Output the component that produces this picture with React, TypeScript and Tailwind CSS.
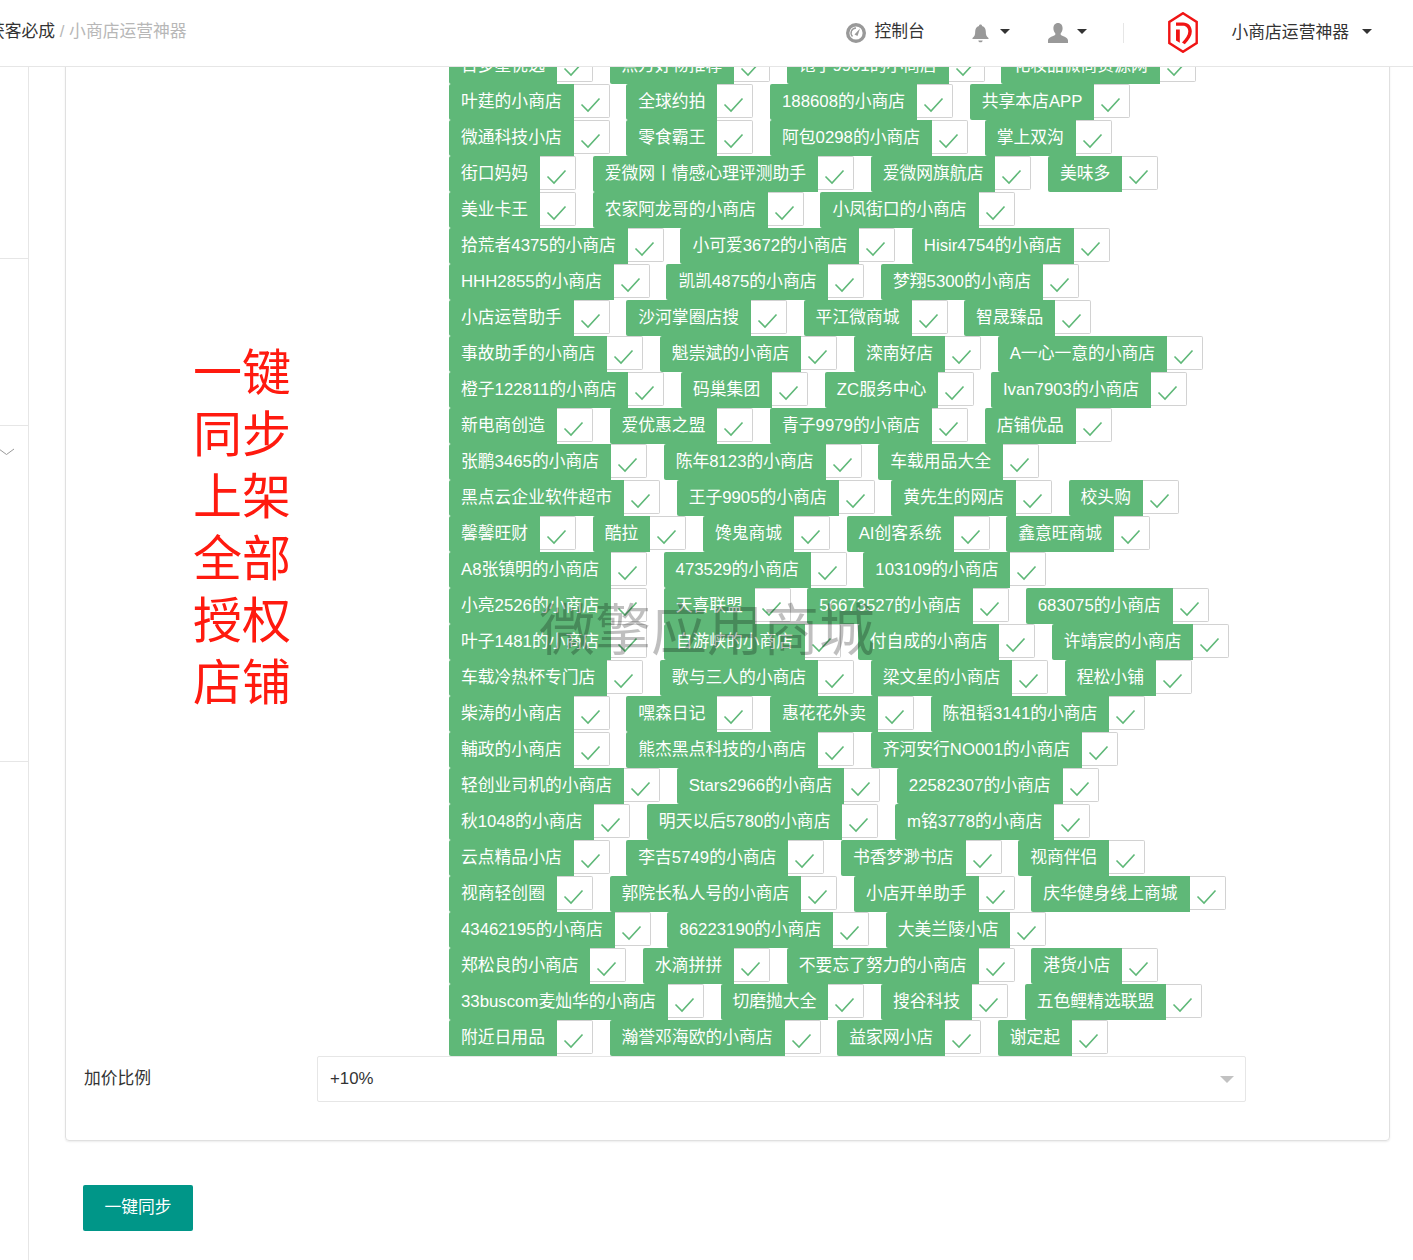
const rows: string[][] = [
  ["百多星优选", "点万好物推荐", "饱子9901的小商店", "化妆品微商货源网"],
  ["叶莛的小商店", "全球约拍", "188608的小商店", "共享本店APP"],
  ["微通科技小店", "零食霸王", "阿包0298的小商店", "掌上双沟"],
  ["街口妈妈", "爱微网丨情感心理评测助手", "爱微网旗航店", "美味多"],
  ["美业卡王", "农家阿龙哥的小商店", "小凤街口的小商店"],
  ["拾荒者4375的小商店", "小可爱3672的小商店", "Hisir4754的小商店"],
  ["HHH2855的小商店", "凯凯4875的小商店", "梦翔5300的小商店"],
  ["小店运营助手", "沙河掌圈店搜", "平江微商城", "智晟臻品"],
  ["事故助手的小商店", "魁崇斌的小商店", "滦南好店", "A一心一意的小商店"],
  ["橙子122811的小商店", "码巢集团", "ZC服务中心", "Ivan7903的小商店"],
  ["新电商创造", "爱优惠之盟", "青子9979的小商店", "店铺优品"],
  ["张鹏3465的小商店", "陈年8123的小商店", "车载用品大全"],
  ["黑点云企业软件超市", "王子9905的小商店", "黄先生的网店", "校头购"],
  ["馨馨旺财", "酷拉", "馋鬼商城", "AI创客系统", "鑫意旺商城"],
  ["A8张镇明的小商店", "473529的小商店", "103109的小商店"],
  ["小亮2526的小商店", "天喜联盟", "56673527的小商店", "683075的小商店"],
  ["叶子1481的小商店", "自游峡的小商店", "付自成的小商店", "许靖宸的小商店"],
  ["车载冷热杯专门店", "歌与三人的小商店", "梁文星的小商店", "程松小铺"],
  ["柴涛的小商店", "嘿森日记", "惠花花外卖", "陈祖韬3141的小商店"],
  ["輔政的小商店", "熊杰黑点科技的小商店", "齐河安行NO001的小商店"],
  ["轻创业司机的小商店", "Stars2966的小商店", "22582307的小商店"],
  ["秋1048的小商店", "明天以后5780的小商店", "m铭3778的小商店"],
  ["云点精品小店", "李吉5749的小商店", "书香梦渺书店", "视商伴侣"],
  ["视商轻创圈", "郭院长私人号的小商店", "小店开单助手", "庆华健身线上商城"],
  ["43462195的小商店", "86223190的小商店", "大美兰陵小店"],
  ["郑松良的小商店", "水滴拼拼", "不要忘了努力的小商店", "港货小店"],
  ["33buscom麦灿华的小商店", "切磨抛大全", "搜谷科技", "五色鲤精选联盟"],
  ["附近日用品", "瀚誉邓海欧的小商店", "益家网小店", "谢定起"],
];

function Caret({ color = "#333333", w = 10, h = 5 }: { color?: string; w?: number; h?: number }) {
  return (
    <svg width={w} height={h} viewBox="0 0 10 5" className="block shrink-0">
      <path d="M0 0h10L5 5z" fill={color} />
    </svg>
  );
}

function Item({ name }: { name: string }) {
  return (
    <div className="flex h-[36px] shrink-0">
      <div className="flex h-[36px] items-center whitespace-nowrap rounded-l-[2px] bg-[#5FB878] px-3 text-white">
        {name}
      </div>
      <div className="h-[34px] w-[36px] rounded-r-[2px] border border-l-0 border-[#d2d2d2] bg-white">
        <svg width="36" height="34" viewBox="0 0 36 34" fill="none">
          <path d="M7.500 19.500L14 26L25.500 13.500" stroke="#5FB878" strokeWidth="1.600" />
        </svg>
      </div>
    </div>
  );
}

export default function App() {
  return (
    <div className="relative flex h-[1260px] flex-col overflow-hidden bg-white font-['Liberation_Sans','Noto_Sans_CJK_SC',sans-serif] text-[16.8px] text-[#333333]">
      <header className="relative z-10 flex h-[67px] shrink-0 items-center border-b border-[#e6e6e6] bg-white">
        <div className="-ml-[12px] -mt-[3px] whitespace-nowrap">
          获客必成 <span className="text-[#b7b7b7]">/ 小商店运营神器</span>
        </div>
        <div className="ml-auto flex items-center">
          <svg width="20" height="20" viewBox="0 0 20 20" fill="none">
            <circle cx="10" cy="10" r="8.300" stroke="#999999" strokeWidth="3.400" />
            <path d="M10 5a5 5 0 0 0-3.500 8.500" stroke="#999999" strokeWidth="1.400" />
            <path d="M8.500 11.500L14 5.500L11.500 13z" fill="#999999" />
          </svg>
          <span className="-mt-[3px] ml-[9px] w-[97px]">控制台</span>
          <svg width="17" height="19" viewBox="0 0 17 19">
            <path
              d="M8.500 0.500c1 0 1.500.6 1.500 1.400 2.600.7 3.800 2.800 3.800 5.600 0 3.200.6 5 2.700 6.600v1H.5v-1c2.100-1.600 2.700-3.400 2.700-6.600 0-2.800 1.200-4.900 3.800-5.600 0-.8.5-1.400 1.500-1.400zM6.300 16.400h4.400c-.2 1.200-1 1.900-2.200 1.900s-2-.7-2.200-1.900z"
              fill="#999999"
            />
          </svg>
          <span className="-mt-[3px] ml-[11px] mr-[38px]">
            <Caret />
          </span>
          <svg width="20" height="20" viewBox="0 0 20 20">
            <path
              d="M10 0c3 0 4.600 2.300 4.600 5.200 0 2-.7 3.800-1.900 5v1.600c1 1.300 7.300 2.100 7.300 5.600V20H0v-2.600c0-3.500 6.300-4.300 7.300-5.600v-1.600C6.100 9 5.400 7.200 5.400 5.200 5.400 2.300 7 0 10 0z"
              fill="#999999"
            />
          </svg>
          <span className="-mt-[3px] ml-[9px] mr-[36px]">
            <Caret />
          </span>
          <div className="h-[20px] w-px bg-[#e6e6e6]" />
          <svg width="30" height="41" viewBox="0 0 30 41" fill="none" className="-mt-[2px] ml-[44px]">
            <path d="M15 1.200L28.700 10V31L15 39.800L1.300 31V10z" stroke="#f01414" strokeWidth="2.400" />
            <path
              d="M8 10.500h7c5.600 0 8.800 3.900 8.800 9 0 3.900-2.300 8-7 12.800l-2.800-1.800c3.500-3.400 6.300-7.300 6.300-11 0-3.300-2-5.800-5.300-5.800H8z"
              fill="#f01414"
            />
            <path d="M8 17.500h3.800v13.300L8 28.400z" fill="#f01414" />
          </svg>
          <span className="-mt-[1px] ml-[34px] whitespace-nowrap">小商店运营神器</span>
          <span className="-mt-[3px] ml-[13px] mr-[41px]">
            <Caret />
          </span>
        </div>
      </header>

      <div className="flex min-h-0 flex-1">
        <aside className="flex w-[29px] shrink-0 flex-col border-r border-[#e6e6e6]">
          <div className="h-[192px] border-b border-[#e6e6e6]" />
          <div className="h-[167px] border-b border-[#e6e6e6]" />
          <div className="h-[336px] border-b border-[#e6e6e6] pt-[22px]">
            <svg width="16" height="8" viewBox="0 0 16 8" fill="none" className="-ml-px">
              <path d="M0 1l7.500 5.500L15 1" stroke="#999999" />
            </svg>
          </div>
        </aside>

        <main className="ml-[36px] w-[1325px] shrink-0">
          <div className="-mt-[20px] rounded-b-[4px] border border-[#e0e0e0] pb-[38px] shadow-[0_1px_2px_rgba(0,0,0,0.08)]">
            <div className="flex">
              <div className="w-[383px] shrink-0 pl-[127px] pt-[294px] text-[49px] leading-[62px] text-[#ff1a0f]">
                <div>一键</div>
                <div>同步</div>
                <div>上架</div>
                <div>全部</div>
                <div>授权</div>
                <div>店铺</div>
              </div>
              <div className="flex flex-col">
                {rows.map((row, i) => (
                  <div key={i} className="flex h-[36px] gap-[16.6px]">
                    {row.map((name) => (
                      <Item key={name} name={name} />
                    ))}
                  </div>
                ))}
              </div>
            </div>
            <div className="flex items-center pl-[18px]">
              <label className="w-[233px] shrink-0">加价比例</label>
              <div className="flex h-[46px] w-[929px] items-center justify-between rounded-[2px] border border-[#e6e6e6] pl-[12px] pr-[11px]">
                <span>+10%</span>
                <Caret color="#c2c2c2" w={14} h={7} />
              </div>
            </div>
          </div>
          <button className="ml-[18px] mt-[44px] h-[46px] w-[110px] rounded-[2px] bg-[#009688] text-center text-white">
            一键同步
          </button>
        </main>
      </div>

      <div className="pointer-events-none absolute left-[539px] top-[596px] z-20 whitespace-nowrap text-[56px] leading-[70px] text-[rgba(0,0,0,0.25)]">
        微擎应用商城
      </div>
    </div>
  );
}
